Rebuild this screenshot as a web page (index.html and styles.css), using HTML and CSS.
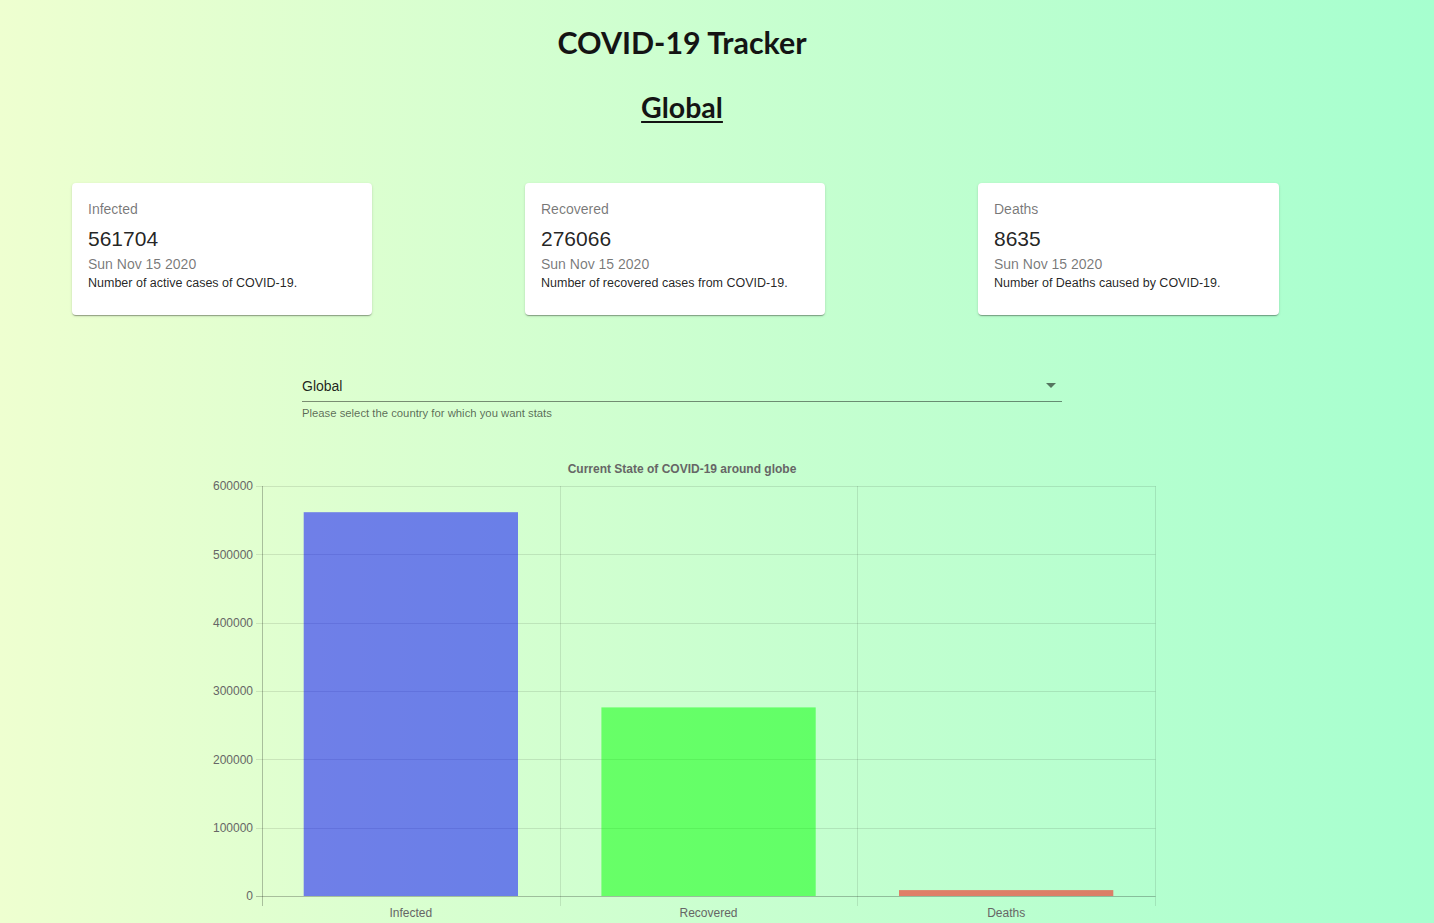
FILE: index.html
```html
<!DOCTYPE html>
<html lang="en">
<head>
<meta charset="utf-8">
<title>COVID-19 Tracker</title>
<link rel="stylesheet" href="styles.css">
</head>
<body>
<div class="app">
  <h1 class="title">COVID-19 Tracker</h1>
  <h2 class="region">Global</h2>

  <div class="cards">
    <div class="card">
      <div class="card-label">Infected</div>
      <div class="card-num">561704</div>
      <div class="card-date">Sun Nov 15 2020</div>
      <div class="card-desc">Number of active cases of COVID-19.</div>
    </div>
    <div class="card">
      <div class="card-label">Recovered</div>
      <div class="card-num">276066</div>
      <div class="card-date">Sun Nov 15 2020</div>
      <div class="card-desc">Number of recovered cases from COVID-19.</div>
    </div>
    <div class="card">
      <div class="card-label">Deaths</div>
      <div class="card-num">8635</div>
      <div class="card-date">Sun Nov 15 2020</div>
      <div class="card-desc">Number of Deaths caused by COVID-19.</div>
    </div>
  </div>

  <div class="picker">
    <div class="select">
      <span class="select-value">Global</span>
      <svg class="select-icon" width="24" height="24" viewBox="0 0 24 24"><path d="M7 10l5 5 5-5z"/></svg>
    </div>
    <div class="helper">Please select the country for which you want stats</div>
  </div>

  <svg class="chart" width="984" height="470" viewBox="0 0 984 470">
    <text class="chart-title" x="492" y="23" text-anchor="middle">Current State of COVID-19 around globe</text>
    <g class="grid">
      <line x1="66" y1="36.5" x2="965.5" y2="36.5"/>
      <line x1="66" y1="104.5" x2="965.5" y2="104.5"/>
      <line x1="66" y1="173.5" x2="965.5" y2="173.5"/>
      <line x1="66" y1="241.5" x2="965.5" y2="241.5"/>
      <line x1="66" y1="309.5" x2="965.5" y2="309.5"/>
      <line x1="66" y1="378.5" x2="965.5" y2="378.5"/>
      <line x1="370.5" y1="36" x2="370.5" y2="456"/>
      <line x1="667.5" y1="36" x2="667.5" y2="456"/>
      <line x1="965.5" y1="36" x2="965.5" y2="456"/>
    </g>
    <g class="axis">
      <line x1="72.5" y1="36" x2="72.5" y2="456"/>
      <line x1="66" y1="446.5" x2="965.5" y2="446.5"/>
    </g>
    <rect class="bar-inf" x="113.7" y="62.2" width="214.3" height="383.8"/>
    <rect class="bar-rec" x="411.4" y="257.4" width="214.3" height="188.6"/>
    <rect class="bar-dea" x="709" y="440.1" width="214.3" height="5.9"/>
    <g class="ylabels" text-anchor="end">
      <text x="63" y="40.3">600000</text>
      <text x="63" y="108.6">500000</text>
      <text x="63" y="177">400000</text>
      <text x="63" y="245.3">300000</text>
      <text x="63" y="313.6">200000</text>
      <text x="63" y="382">100000</text>
      <text x="63" y="450.3">0</text>
    </g>
    <g class="xlabels" text-anchor="middle">
      <text x="220.8" y="467">Infected</text>
      <text x="518.5" y="467">Recovered</text>
      <text x="816.2" y="467">Deaths</text>
    </g>
  </svg>
</div>
</body>
</html>
```
FILE: styles.css
```css
html {
  min-height: 100%;
  background: linear-gradient(to right, #eeffd0, #a6ffcf);
}

body {
  margin: 0;
  font-family: "Liberation Sans", Arial, sans-serif;
  overflow: hidden;
}

.app {
  width: 1364px;
  display: flex;
  flex-direction: column;
}

.title,
.region {
  font-family: Lato, "Liberation Sans", sans-serif;
  font-weight: 700;
  color: #141414;
  text-align: center;
  margin: 0;
  line-height: 36px;
}

.title {
  font-size: 30.4px;
  margin-top: 24px;
}

.region {
  font-size: 28.5px;
  margin-top: 29px;
  text-decoration: underline;
  text-decoration-thickness: 2px;
  text-underline-offset: 3px;
}

.cards {
  display: flex;
  gap: 153px;
  padding-left: 72px;
  margin-top: 58px;
}

.card {
  width: 300px;
  box-sizing: border-box;
  padding: 16px 16px 23px;
  background: #fff;
  border-radius: 4px;
  box-shadow: 0 2px 1px -1px rgba(0, 0, 0, 0.2), 0 1px 1px 0 rgba(0, 0, 0, 0.14), 0 1px 3px 0 rgba(0, 0, 0, 0.12);
}

.card:last-child {
  width: 301px;
}

.card-label {
  font-size: 14px;
  line-height: 20px;
  color: rgba(0, 0, 0, 0.54);
  margin-bottom: 6px;
}

.card-num {
  font-size: 21px;
  line-height: 28px;
  color: rgba(0, 0, 0, 0.87);
}

.card-date {
  font-size: 14px;
  line-height: 20px;
  margin-top: 1px;
  color: rgba(0, 0, 0, 0.54);
}

.card-desc {
  font-size: 12.5px;
  line-height: 18px;
  color: rgba(0, 0, 0, 0.87);
}

.picker {
  width: 760px;
  margin: 55px auto 0;
}

.select {
  position: relative;
  padding: 7px 0 5px;
  border-bottom: 1px solid rgba(0, 0, 0, 0.45);
  height: 19px;
}

.select-value {
  font-size: 14px;
  line-height: 19px;
  color: rgba(0, 0, 0, 0.87);
}

.select-icon {
  position: absolute;
  right: -1px;
  top: 3px;
  fill: rgba(0, 0, 0, 0.54);
}

.helper {
  margin-top: 2px;
  font-size: 11.3px;
  line-height: 18px;
  color: rgba(0, 0, 0, 0.6);
}

.chart {
  display: block;
  margin: 28px auto 0;
  font-family: "Liberation Sans", Arial, sans-serif;
}

.chart-title {
  font-size: 12px;
  font-weight: 700;
  fill: #666;
}

.grid line {
  stroke: rgba(0, 0, 0, 0.1);
  stroke-width: 1;
}

.axis line {
  stroke: rgba(0, 0, 0, 0.25);
  stroke-width: 1;
}

.bar-inf {
  fill: rgba(0, 0, 255, 0.5);
}

.bar-rec {
  fill: rgba(0, 255, 0, 0.5);
}

.bar-dea {
  fill: rgba(255, 0, 0, 0.5);
}

.ylabels text,
.xlabels text {
  font-size: 12px;
  fill: #666;
}
```
